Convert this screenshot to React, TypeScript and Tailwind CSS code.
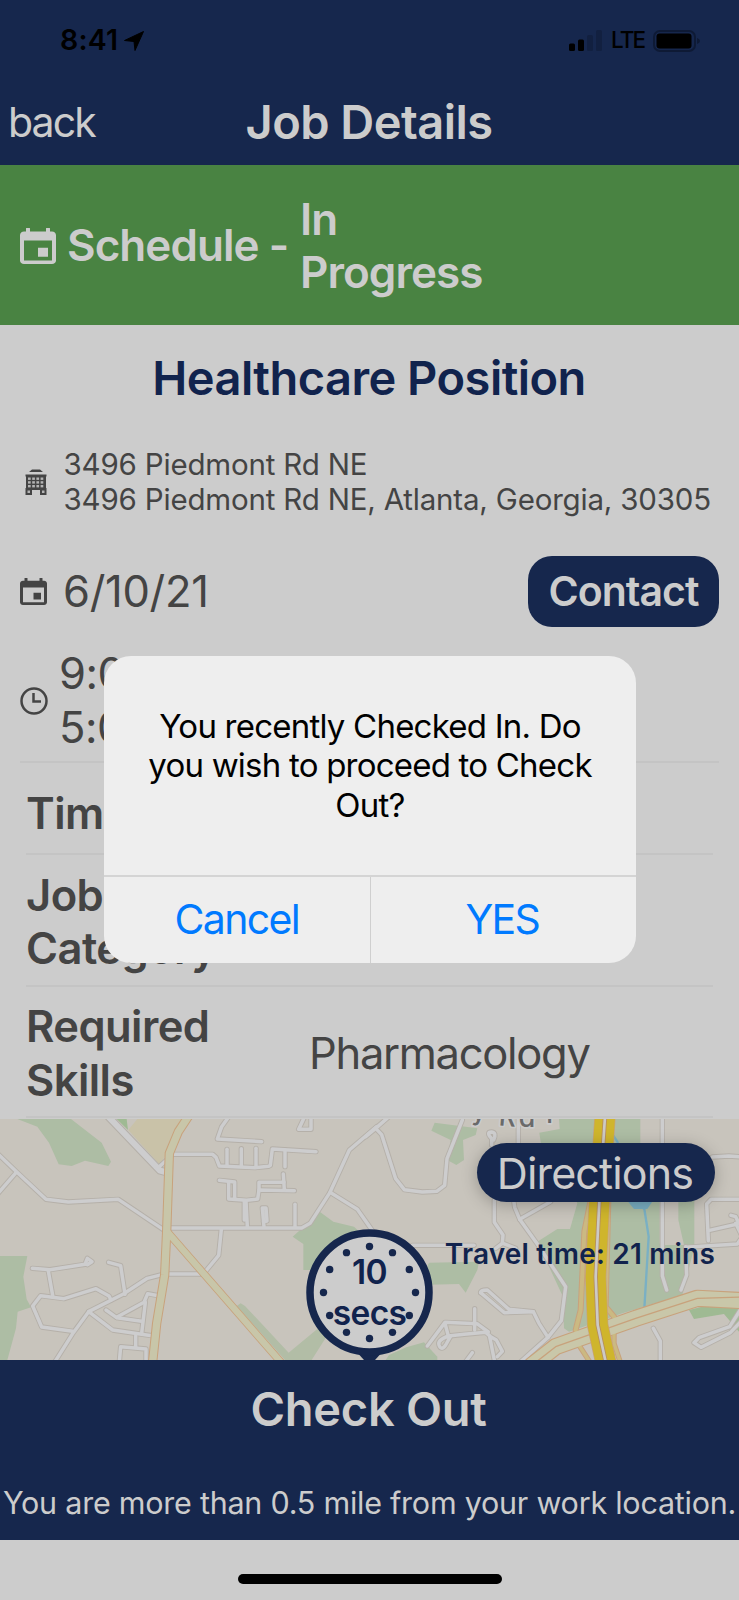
import { ReactNode } from "react";

const minorRoadsLeft = [
  "M-10 128 L48 184 L138 268 L205 276 L355 268 L495 362",
  "M-10 255 L48 188",
  "M520 133 H638 L648 142 L658 168 L765 173 L805 169 L811 166 L817 117 L948 125",
  "M681 165 V118", "M724 168 V116", "M768 170 V115", "M855 170 V120",
  "M785 95 L652 87 L665 50 L685 22",
  "M912 24 L896 58 H933 V24",
  "M658 211 L704 216 V265", "M686 215 V267 L740 271 L773 267 L777 240 L883 242",
  "M777 240 V217 H852", "M850 192 L853 240",
  "M733 274 V330 M738 274 L742 350", "M792 350 L787 294 H798 L801 333 L790 335",
  "M885 350 V283", "M512 354 H905 L930 340 L990 247 L1048 120 L1130 50",
  "M990 247 L1072 298 L1130 380",
  "M664 358 L656 436 L614 487", "M504 492 H602",
  "M97 475 L150 479 L255 463 L262 445 L276 455 L262 464", "M145 483 L158 556",
  "M326 457 L362 467 L375 553",
  "M486 494 L442 505 L370 552 L266 605 L220 668 L165 755",
  "M333 570 L327 558 L288 536 L192 566 L122 557 L98 588 L125 651 L218 664",
  "M266 605 L338 660 L455 677", "M318 600 L350 623 L425 634",
  "M475 557 L443 551 L432 577 L350 622", "M436 577 L425 670",
  "M407 678 V710", "M358 755 L362 710 L438 717 V755",
];

const minorRoadsRight = [
  "M-10 80 L20 55 L60 20", "M20 55 L38 74 L80 206 L106 239 L160 246 L203 244 L227 226 L234 146 L280 30",
  "M368 105 V86 Q350 66 368 66 Q384 68 374 90", "M448 20 V100", "M880 20 V498 L893 540",
  "M376 270 V337 L402 375 L400 400 L380 415 M402 400 L440 415",
  "M434 270 L437 292 L452 328 L505 402 L590 530 L577 632 L537 682 L455 755",
  "M452 328 L545 275", "M130 406 H315",
  "M1030 141 L1080 138 L1120 141",
  "M1120 268 H1026 L1013 282 L1018 392", "M1018 362 L1110 341 L1100 320 L1086 316",
  "M950 412 L1105 402 L1120 380 L1100 340", "M950 410 L953 495 L936 540",
  "M335 548 Q335 540 355 540 L420 598 L493 605 L510 640 L537 682", "M335 548 L406 608 L493 605",
  "M317 596 V660", "M175 708 L228 637 L324 641 L358 666", "M228 640 L238 678 L285 673 L350 667 L365 680 L382 690 L400 724 L385 740",
  "M238 678 Q205 690 210 705 Q217 724 230 705 L244 680", "M362 680 L376 750", "M310 728 L290 755",
  "M853 655 L874 693 V760", "M1120 590 L1082 650 L990 683 L975 698 L996 712 L1084 668 L1120 630",
];

const MapView = () => {
  return <svg className="block h-full w-full" viewBox="0 27 2217 723" preserveAspectRatio="none" fill="none" strokeLinejoin="round" strokeLinecap="round">
    <rect y="20" width="2217" height="735" fill="#c8c4bc" />
    {/* parks */}
    <g fill="#adbda4">
      <path d="M52 27 H213 L305 98 L333 155 L325 168 L255 152 L215 168 L176 163 L147 98 L112 50Z" />
      <path d="M0 438 H82 L70 500 L80 568 L93 592 L53 605 L48 655 L22 750 H0Z" />
      <path d="M878 380 L960 306 L1000 335 L1062 350 L1160 440 V480 H910 V402Z" />
      <path d="M722 580 L735 588 L866 728 L960 650 L1030 600 L935 750 H855 L710 588Z" fill="#b2bda6" />
      <path d="M350 27 H380 L384 60Z" fill="#9fba93" />
    </g>
    <path d="M412 27 H560 L500 130 L480 165 L385 60Z" fill="#c9c2a8" />
    <g transform="translate(1107 0)">
      <g fill="#adbda4">
        <path d="M197 38 L325 55 L320 75 L282 90 L285 150 L262 165 L235 150 L245 90 L187 62Z" />
        <path d="M570 27 H814 V120 H930 L976 270 V410 L940 555 L760 610 L600 665 L585 655 L582 560 L505 395 L565 357 H603 L625 280 L560 130 H520 L511 68 L572 57Z" />
        <path d="M180 458 L330 455 L325 480 L290 548 L270 522 L150 525Z" />
        <path d="M112 712 L165 697 L205 740 V750 H50 L60 735Z" />
        <path d="M960 600 L1060 575 L1110 590 V665 L1065 612 L975 627Z" fill="#9fba93" />
      </g>
      <path d="M872 120 H928 V330 L945 405 H885 L872 400Z" fill="#c8c4bc" />
      <path d="M700 27 L745 95 L800 275 L826 297 L839 380 L826 595" stroke="#7ab0c4" strokeWidth="7" />
      <path d="M775 272 H852 L835 297 H795Z" fill="#7ab0c4" />
    </g>
    <g stroke="#b5b0a9" strokeWidth="16">
      {minorRoadsLeft.map(d => <path key={d} d={d} />)}
      <path d="M325 20 L480 182 L497 186" strokeWidth="24" />
      <path d="M480 168 L500 150" />
      <g transform="translate(1107 0)">{minorRoadsRight.map(d => <path key={d} d={d} />)}</g>
    </g>
    <g stroke="#cdcdce" strokeWidth="10.500">
      {minorRoadsLeft.map(d => <path key={d} d={d} />)}
      <path d="M325 20 L480 182 L497 186" strokeWidth="18" />
      <path d="M480 168 L500 150" />
      <g transform="translate(1107 0)">{minorRoadsRight.map(d => <path key={d} d={d} />)}</g>
    </g>
    {/* main roads */}
    <g stroke="#c8a27c">
      <path d="M504 368 L850 765" strokeWidth="24" />
      <path d="M568 15 L535 65 L508 130 L500 365 L494 495 L470 640 L457 765" strokeWidth="28" />
    </g>
    <g stroke="#c8c6a9">
      <path d="M504 368 L850 765" strokeWidth="19" />
      <path d="M568 15 L535 65 L508 130 L500 365 L494 495 L470 640 L457 765" strokeWidth="22" />
    </g>
    <g transform="translate(1107 0)">
      <g stroke="#c8a27c">
        <path d="M665 270 L646 365 L635 600 L620 660 M718 270 L710 590 L735 620" strokeWidth="18" />
        <path d="M620 690 L665 760 M735 660 V700 L755 760" strokeWidth="16" />
        <path d="M490 765 L560 710 L800 625 L985 565 L1125 572" strokeWidth="52" />
      </g>
      <g stroke="#cbb982">
        <path d="M665 270 L646 365 L635 600 L620 660 M718 270 L710 590 L735 620" strokeWidth="12" />
        <path d="M620 690 L665 760 M735 660 V700 L755 760" strokeWidth="10" />
      </g>
      <path d="M490 765 L560 710 L800 625 L985 565 L1125 572" stroke="#c9c7a9" strokeWidth="45" />
      <path d="M490 765 L560 710 L800 625 L985 565 L1125 561" stroke="#c8a27c" strokeWidth="4" />
      <path d="M708 20 L691 275 L680 500 L686 645 L712 765" stroke="#c8a27c" strokeWidth="64" />
      <path d="M708 20 L691 275 L680 500 L686 645 L712 765" stroke="#cfb52c" strokeWidth="60" />
      <path d="M708 20 L691 275 L680 500 L686 645 L712 765" stroke="#b58e60" strokeWidth="13" />
      <path d="M708 20 L691 275 L680 500 L686 645 L712 765" stroke="#cccac6" strokeWidth="8" />
      <g className="font-[Inter] text-[80px] font-medium" fill="#6a6a6a" stroke="#ccc" strokeWidth="10" paintOrder="stroke">
        <text x="306" y="29">y</text>
        <text x="388" y="46" transform="rotate(5 388 46)">R</text>
        <text x="449" y="51">d</text>
        <text x="532" y="38">r</text>
      </g>
    </g>
  </svg>
}

const CalendarIcon = ({ className }: { className: string }) => (
  <svg className={className} viewBox="3 1 18 20" preserveAspectRatio="none" fill="currentColor">
    <path d="M17 12h-5v5h5v-5zM16 1.500v1.500H8V1.500a1 1 0 0 0-2 0v1.500H5c-1.100 0-2 .9-2 2v14c0 1.100.9 2 2 2h14c1.100 0 2-.9 2-2V5c0-1.100-.9-2-2-2h-1V1.500a1 1 0 0 0-2 0zm3 17.500H5V8h14v11z" />
  </svg>
)

const BuildingIcon = () => (
  <svg className="h-[26px] w-[22px]" viewBox="0 0 22 26" fill="#444">
    <path d="M7 .5h8l3 2.500H4zM.5 5.500h21v2H.5z" />
    <path d="M1 7h20v12h.5v7H15v-5H7v5H.5v-7H1z" />
    <g fill="#b4b4b4">
      {[8.5, 12.2, 16].map(y => [3, 7.2, 11.4, 15.6].map(x => <rect key={`${x}-${y}`} x={x} y={y} width="2.700" height="2.400" />))}
      <path d="M2.500 21.500h2.500v2.500H2.500zM17 21.500h2.500v2.500H17z" />
    </g>
  </svg>
)

const StatusBar = () => {
  return <div className="flex h-[81px] items-center justify-between pl-[60px] pr-[39px] text-black">
    <div className="flex items-center gap-[6px]">
      <span className="text-[28.500px] font-semibold leading-none tracking-[0.2px]">8:41</span>
      <svg className="h-[20px] w-[20px]" viewBox="0 0 20 20"><path d="M19.500.5 L11 19.500 L10 10.500 L.5 9.500Z" fill="#000" stroke="#000" strokeLinejoin="round" /></svg>
    </div>
    <div className="flex items-center">
      <svg className="h-[21px] w-[33px]" viewBox="0 0 33 21">
        <rect x="0" y="13.500" width="6" height="7.500" rx="1.500" />
        <rect x="9" y="9.500" width="6" height="11.500" rx="1.500" />
        <rect x="18" y="5" width="6" height="16" rx="1.500" fill="#122040" />
        <rect x="27" y="0" width="6" height="21" rx="1.500" fill="#122040" />
      </svg>
      <span className="ml-[9px] w-[34px] text-[22.500px] font-medium leading-none tracking-[-1.900px]">LTE</span>
      <svg className="ml-[8px] h-[22px] w-[47px]" viewBox="0 0 47 22">
        <rect x="1" y="1" width="41" height="20" rx="6" fill="none" stroke="#0e1a35" strokeWidth="2" />
        <rect x="3.500" y="3.500" width="35" height="15" rx="3" />
        <path d="M44 8 Q47 9 47 11 Q47 13 44 14Z" fill="#0e1a35" />
      </svg>
    </div>
  </div>
}

interface RowProps {
  label: ReactNode,
  value?: string,
  className: string,
}

const Row = ({ label, value, className }: RowProps) => {
  return <div className={`mx-[26px] flex shrink-0 items-center border-b-2 border-[#c4c4c4] text-[43.500px] leading-[53.500px] ${className}`}>
    <div className="w-[283px] font-semibold tracking-[-0.013em]">{label}</div>
    <div className="tracking-[-1.300px]">{value}</div>
  </div>
}

const Timer = () => {
  const dots = Array.from({ length: 12 }, (_, i) => i * Math.PI / 6);
  return <div className="absolute left-[306px] top-[110px] h-[131px] w-[127px] text-[#11234d]">
    <svg className="absolute inset-0 h-full w-full" viewBox="0 0 127 131">
      <path d="M48 120 H79 L69 131 H58Z" fill="#16274d" />
      <circle cx="63.500" cy="63.500" r="59.500" fill="#ccc" stroke="#16274d" strokeWidth="7.500" />
      {dots.map(a => <circle key={a} cx={63.5 + 46 * Math.cos(a)} cy={63.5 + 46 * Math.sin(a)} r="3.700" fill="#16274d" />)}
    </svg>
    <div className="relative pt-[23px] text-center text-[33.500px] font-semibold leading-[41px] tracking-[-0.6px]">
      10<br />secs
    </div>
  </div>
}

const Alert = () => {
  return <div className="absolute left-[104px] top-[655.500px] flex h-[307.500px] w-[532px] flex-col overflow-hidden rounded-[27px] bg-[#eeeeee] text-black">
    <div className="flex-1 pt-[51px] text-center text-[33px] leading-[39.600px] tracking-[-0.780px]">
      You recently Checked In. Do<br />you wish to proceed to Check<br />Out?
    </div>
    <div className="flex h-[88px] border-t-2 border-[#d4d4d4] text-[41px] tracking-[-1.700px] text-[#007aff]">
      <button className="w-[266.500px] border-r border-[#cfcfcf]">Cancel</button>
      <button className="flex-1 pr-[2px]">YES</button>
    </div>
  </div>
}

const App = () => {
  return <div className="relative flex h-[1600px] w-[739px] flex-col overflow-hidden bg-[#cccccc] font-[Inter,sans-serif] text-[#444]">
    <header className="h-[165px] shrink-0 bg-[#16274d] text-[#cccccc]">
      <StatusBar />
      <div className="relative flex h-[82px] items-center justify-center">
        <span className="absolute left-[8px] pt-[2px] text-[41px] tracking-[-1.900px]">back</span>
        <h1 className="pr-px text-[47px] font-semibold tracking-[-0.550px]">Job Details</h1>
      </div>
    </header>

    <div className="flex h-[160px] shrink-0 items-center bg-[#498342] pl-[20px] pt-[2px] text-[44px] font-semibold leading-[53.500px] tracking-[-0.950px] text-[#cccccc]">
      <CalendarIcon className="h-[36px] w-[36px]" />
      <span className="ml-[11px] w-[233px] whitespace-nowrap">Schedule -</span>
      <span>In<br />Progress</span>
    </div>

    <h2 className="h-[107px] shrink-0 pr-px text-center text-[47px] font-semibold leading-[106px] tracking-[-0.540px] text-[#11234d]">Healthcare Position</h2>

    <div className="flex h-[100px] shrink-0 items-center pl-[25px] text-[29.500px] leading-[35.500px] tracking-[-0.180px]">
      <BuildingIcon />
      <div className="ml-[16.500px] whitespace-nowrap">3496 Piedmont Rd NE<br />3496 Piedmont Rd NE, Atlanta, Georgia, 30305</div>
    </div>

    <div className="flex h-[118px] shrink-0 items-center pl-[20px] pr-[20px] text-[43.500px]">
      <CalendarIcon className="h-[27px] w-[27px]" />
      <span className="ml-[16px] flex-1 pt-[2px] tracking-[-0.3px]">6/10/21</span>
      <button className="h-[71px] w-[191px] rounded-[24px] bg-[#16274d] pt-[2px] text-[41px] font-semibold tracking-[-1px] text-[#cccccc]">Contact</button>
    </div>

    <div className="mx-[20px] flex h-[113px] shrink-0 items-center border-b-2 border-[#c4c4c4] pb-[10px] text-[43.500px] leading-[53.500px]">
      <svg className="h-[28px] w-[28px]" viewBox="0 0 28 28" fill="none" stroke="#444" strokeWidth="2.500">
        <circle cx="14" cy="14" r="12.500" />
        <path d="M13.500 6 V14.500 H21" />
      </svg>
      <div className="ml-[11px] tracking-[-0.5px]">9:00 AM<br />5:00 PM</div>
    </div>

    <Row className="h-[92px] pt-[11px]" label="Time" />
    <Row className="h-[132px] pt-[4px]" label={<>Job<br />Category</>} />
    <Row className="h-[131px] pt-[4px]" label={<>Required<br />Skills</>} value="Pharmacology" />

    <div className="relative mt-px h-[241px] shrink-0 overflow-hidden">
      <MapView />
      <button className="absolute left-[477px] top-[24px] h-[59px] w-[238px] rounded-full bg-[#16274d] pr-[2px] pt-px text-[43px] leading-none tracking-[-0.850px] text-[#cccccc] shadow-[0_3px_16px_rgba(0,0,0,0.25)]">Directions</button>
      <span className="absolute right-[24px] top-[115px] whitespace-nowrap text-[28px] font-semibold leading-[41px] tracking-[0.180px] text-[#11234d]">Travel time: 21 mins</span>
      <Timer />
    </div>

    <footer className="h-[180px] shrink-0 bg-[#16274d] text-center text-[#cccccc]">
      <div className="h-[98px] pr-[2px] text-[47px] font-semibold leading-[98px] tracking-[-0.3px]">Check Out</div>
      <div className="whitespace-nowrap text-[30.500px] leading-[90px] tracking-[-0.240px]">You are more than 0.5 mile from your work location.</div>
    </footer>
    <div className="mx-auto mt-[34px] h-[10px] w-[264px] rounded-full bg-black" />

    <Alert />
  </div>
}

export default App;
